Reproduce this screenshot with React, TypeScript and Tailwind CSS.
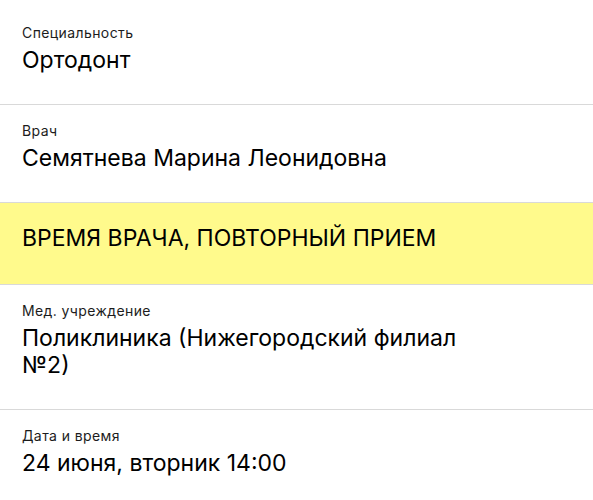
import React from "react";

const Field = ({ label, value, first }: { label: string; value: string; first?: boolean }) => {
  return (
    <div className={`${first ? "pt-[25px]" : "pt-[18px]"} pb-[30px] pl-[22px] pr-[100px] border-b border-[#d9d9d9]`}>
      <div className="text-[14px] leading-[16px] tracking-[0.4px] text-[#1c1c1c]">{label}</div>
      <div className="mt-[6px] text-[23px] leading-[27px] text-black">{value}</div>
    </div>
  );
};

export default function App() {
  return (
    <div className="w-[593px] h-[500px] overflow-hidden bg-white" style={{ fontFamily: "Inter, Roboto, sans-serif" }}>
      <Field first label="Специальность" value="Ортодонт" />
      <Field label="Врач" value="Семятнева Марина Леонидовна" />
      <div className="bg-[#fffa8c] pt-[22px] pb-[33px] pl-[22px] border-b border-[#d9d9d9]">
        <div className="text-[23px] leading-[26px] text-black">ВРЕМЯ ВРАЧА, ПОВТОРНЫЙ ПРИЕМ</div>
      </div>
      <Field label="Мед. учреждение" value="Поликлиника (Нижегородский филиал №2)" />
      <Field label="Дата и время" value="24 июня, вторник 14:00" />
    </div>
  );
}
